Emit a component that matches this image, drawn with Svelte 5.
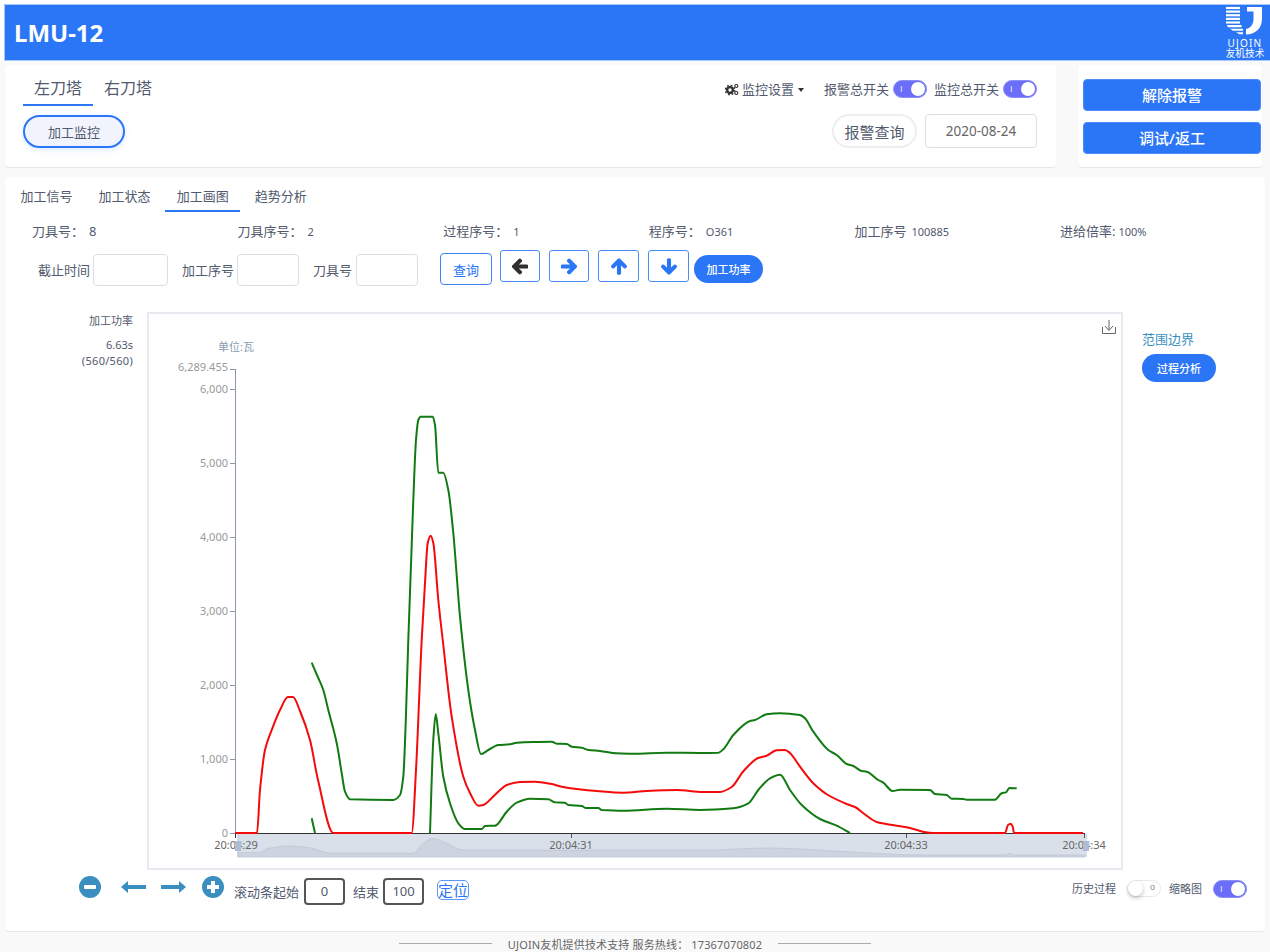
<script>
  const red = [[235,833],[257,833],[260,790],[265,750],[271.7,730],[280,710],[288,697],[293,697],[300,711],[310,740],[318,780],[333.3,833],[411.7,833],[416,770],[421.7,640],[425,583],[427.7,543],[430.7,535.7],[433.3,543],[438.3,600],[443.3,645],[451.7,716.7],[463.3,776.7],[470,793],[478.3,805.7],[483.3,805],[493,796.7],[500,790],[506.7,785],[520,782],[535,781.7],[551.7,784],[561.7,786.7],[576.7,789],[596.7,791],[623,792.7],[646.7,791],[676.7,790],[703,792],[720,792],[731.7,787],[743,771.7],[758,758],[766.7,755.7],[776.7,750.3],[785,750],[790,753],[800,766.7],[813,783],[828,795],[846.7,804],[855,807],[863,813],[876.7,822],[896.7,825.7],[910,828],[923,831.7],[933,833],[1005,833],[1008,825],[1010.7,823.7],[1012.7,826.7],[1014,833],[1083,833]];
  const greenTop = [[311.7,662.7],[318.3,678],[323.3,690],[328.3,710],[336.7,743],[341.7,773],[345,791.7],[350,799.3],[393.3,800],[400,795],[403.3,776.7],[405.7,723],[408.3,640],[413.3,500],[416,440],[418.3,420],[420.7,416.7],[432.7,416.7],[435,425],[438.3,472.7],[443.3,472.7],[448.3,490],[453.3,533],[460,616.7],[468.3,690],[475,730],[481,754],[488.3,750],[498.3,745],[510,744.3],[516.7,742.7],[533,742],[551.7,741.7],[556.7,743.7],[566.7,744],[571.7,746.7],[581.7,747.7],[588.3,750],[600,751],[616.7,753.3],[633,753.7],[666.7,752.7],[700,753],[718.3,752.7],[723.3,749.3],[733.3,735],[750,721],[755,720],[766.7,714.3],[780,713.3],[800,715],[805,718.3],[813.3,731.7],[828.3,750],[836.7,755],[846.7,764],[853.3,766],[861.7,771],[866.7,771.7],[878.3,780],[883.3,782.7],[892.7,791],[900,789.7],[930,790],[935,794],[946.7,795],[951.7,798.7],[963.3,799],[966.7,799.7],[995,799.7],[1001.7,793.3],[1006,792.3],[1009.3,788],[1016.7,788.3]];
  const greenLowA = [[311.7,818.3],[315,833]];
  const greenLowB = [[430,833],[433.3,740],[435.7,714],[438.3,733.3],[443.3,776.7],[450,803.3],[458.3,823.3],[465,829],[481.7,829],[485,826],[495,825.7],[506.7,811.7],[516.7,802.7],[530,798.7],[548.3,799.3],[555,802.3],[565,802.7],[568.3,805],[581.7,806],[586,808],[598.3,808],[601.7,810],[623.3,810.7],[666.7,808.7],[700,810],[733,808.3],[748.3,803.3],[758.3,790],[770,778.3],[780,774.7],[790,790],[801.7,805],[820,819],[836.7,825.7],[850,833]];
  const thumb = [[238,852.7],[260,852.7],[266.7,848.7],[290,846],[306.7,847.3],[333,853.3],[413,853.3],[421.7,845],[431.7,838.3],[443.3,841.7],[463,850],[530,850.3],[700,850.3],[770,848],[850,852],[920,855],[1005,855],[1010,853.5],[1014,855],[1085,855]];

  // monotone cubic: flat runs stay flat and peaks do not overshoot
  function smooth(pts) {
    const n = pts.length;
    const sec = [];
    for (let i = 0; i < n - 1; i++) sec.push((pts[i + 1][1] - pts[i][1]) / (pts[i + 1][0] - pts[i][0]));
    const m = pts.map((_, i) => {
      if (i === 0) return sec[0];
      if (i === n - 1) return sec[n - 2];
      const a = sec[i - 1];
      const b = sec[i];
      return a * b <= 0 ? 0 : (2 * a * b) / (a + b);
    });
    let d = `M${pts[0][0]} ${pts[0][1]}`;
    for (let i = 0; i < n - 1; i++) {
      const dx = (pts[i + 1][0] - pts[i][0]) / 3;
      const c1x = pts[i][0] + dx;
      const c1y = pts[i][1] + m[i] * dx;
      const c2x = pts[i + 1][0] - dx;
      const c2y = pts[i + 1][1] - m[i + 1] * dx;
      d += `C${c1x.toFixed(1)} ${c1y.toFixed(1)} ${c2x.toFixed(1)} ${c2y.toFixed(1)} ${pts[i + 1][0]} ${pts[i + 1][1]}`;
    }
    return d;
  }
  const thumbArea = smooth(thumb) + 'L1085 857L238 857Z';
  const yTicks = [[0,833],[1000,759],[2000,685],[3000,611],[4000,537],[5000,463],[6000,389]];
  const fmt = (n) => n.toLocaleString('en-US');
  const infos = [
    { k: '刀具号：', v: '8', big: true },
    { k: '刀具序号：', v: '2' },
    { k: '过程序号：', v: '1' },
    { k: '程序号：', v: 'O361' },
    { k: '加工序号', v: '100885' },
    { k: '进给倍率:', v: '100%', tight: true }
  ];
</script>

<div class="page">
  <div class="top">
    <header class="bar">
      <h1>LMU-12</h1>
      <div class="logo">
        <svg width="38" height="29" viewBox="0 0 38 32" preserveAspectRatio="none">
          <g fill="#fff">
            <rect x="0" y="1" width="14" height="2.4" />
            <rect x="0" y="5" width="14" height="2.4" />
            <rect x="0" y="9" width="14" height="2.4" />
            <rect x="0" y="13" width="14" height="2.4" />
            <rect x="0" y="17" width="14" height="2.4" />
            <path d="M0.6 21H15.5V23.4H2.2Z" />
            <path d="M4 25H17V27.4H7Z" />
            <path d="M10 29H17V31.3H13.5Z" />
            <path d="M21 1H36V14C36 24 30 31 20 31.5V25.5C25 24 27.5 20 27.5 14V6H21Z" />
          </g>
        </svg>
        <span class="ujoin">UJOIN</span>
        <span class="ujcn">友机技术</span>
      </div>
    </header>
  </div>

  <div class="toprow">
    <section class="card cardleft">
      <div class="cl">
        <div class="turrets">
          <span class="turret on">左刀塔</span>
          <span class="turret">右刀塔</span>
        </div>
        <button class="monitor">加工监控</button>
      </div>
      <div class="cr">
        <div class="setrow">
          <span class="gears">
            <svg width="14" height="13" viewBox="0 0 14 13">
              <circle cx="5" cy="7" r="2.9" fill="none" stroke="#333" stroke-width="2.4" />
              <circle cx="5" cy="7" r="4.7" fill="none" stroke="#333" stroke-width="1.4" stroke-dasharray="1.8 1.9" />
              <circle cx="11.3" cy="3" r="1.5" fill="none" stroke="#333" stroke-width="1.2" />
              <circle cx="11.3" cy="10" r="1.5" fill="none" stroke="#333" stroke-width="1.2" />
            </svg>
          </span>
          <span class="setlabel">监控设置</span>
          <i class="caret"></i>
          <span class="swlabel first">报警总开关</span>
          <span class="sw on"><em>I</em><b></b></span>
          <span class="swlabel second">监控总开关</span>
          <span class="sw on"><em>I</em><b></b></span>
        </div>
        <div class="queryrow">
          <button class="alarmq">报警查询</button>
          <div class="date">2020-08-24</div>
        </div>
      </div>
    </section>
    <section class="card cardright">
      <button class="primary">解除报警</button>
      <button class="primary">调试/返工</button>
    </section>
  </div>

  <main class="card mainc">
    <nav class="tabs">
      <span class="tab">加工信号</span>
      <span class="tab">加工状态</span>
      <span class="tab on">加工画图</span>
      <span class="tab">趋势分析</span>
    </nav>

    <div class="infos">
      {#each infos as it}
        <div class="info">
          <span class="ik">{it.k}</span><span class="iv" class:big={it.big} class:tight={it.tight}>{it.v}</span>
        </div>
      {/each}
    </div>

    <div class="filters">
      <label class="fl w1">截止时间<span class="inp i1"></span></label>
      <label class="fl w2">加工序号<span class="inp i2"></span></label>
      <label class="fl w3">刀具号<span class="inp i2"></span></label>
      <button class="query">查询</button>
      <div class="arrows">
        <button class="arr a40" aria-label="左">
          <svg width="16" height="17" viewBox="0 0 448 512"><path fill="#2f2f2f" stroke="#2f2f2f" stroke-width="44" stroke-linejoin="round" d="M257.5 445.1l-22.2 22.2c-9.4 9.4-24.6 9.4-33.9 0L7 273c-9.4-9.4-9.4-24.6 0-33.9L201.4 44.7c9.4-9.4 24.6-9.4 33.9 0l22.2 22.2c9.5 9.5 9.3 25-.4 34.3L136.6 216H424c13.3 0 24 10.7 24 24v32c0 13.3-10.7 24-24 24H136.6l120.5 114.8c9.8 9.3 10 24.8.4 34.3z"/></svg>
        </button>
        <button class="arr a40" aria-label="右">
          <svg width="16" height="17" viewBox="0 0 448 512"><path fill="#2a76f6" stroke="#2a76f6" stroke-width="44" stroke-linejoin="round" d="M190.5 66.9l22.2-22.2c9.4-9.4 24.6-9.4 33.9 0L441 239c9.4 9.4 9.4 24.6 0 33.9L246.6 467.3c-9.4 9.4-24.6 9.4-33.9 0l-22.2-22.2c-9.5-9.5-9.3-25 .4-34.3L311.4 296H24c-13.3 0-24-10.7-24-24v-32c0-13.3 10.7-24 24-24h287.4L190.9 101.2c-9.8-9.3-10-24.8-.4-34.3z"/></svg>
        </button>
        <button class="arr a41" aria-label="上">
          <svg width="16" height="17" viewBox="0 0 448 512"><path fill="#2a76f6" stroke="#2a76f6" stroke-width="44" stroke-linejoin="round" d="M34.9 289.5l-22.2-22.2c-9.4-9.4-9.4-24.6 0-33.9L207 39c9.4-9.4 24.6-9.4 33.9 0l194.3 194.3c9.4 9.4 9.4 24.6 0 33.9L413 289.4c-9.5 9.5-25 9.3-34.3-.4L264 168.6V456c0 13.3-10.7 24-24 24h-32c-13.3 0-24-10.7-24-24V168.6L69.2 289.1c-9.3 9.8-24.8 10-34.3.4z"/></svg>
        </button>
        <button class="arr a41 last" aria-label="下">
          <svg width="16" height="17" viewBox="0 0 448 512"><path fill="#2a76f6" stroke="#2a76f6" stroke-width="44" stroke-linejoin="round" d="M413.1 222.5l22.2 22.2c9.4 9.4 9.4 24.6 0 33.9L241 473c-9.4 9.4-24.6 9.4-33.9 0L12.7 278.6c-9.4-9.4-9.4-24.6 0-33.9l22.2-22.2c9.5-9.5 25-9.3 34.3.4L184 343.4V56c0-13.3 10.7-24 24-24h32c13.3 0 24 10.7 24 24v287.4l114.8-120.5c9.3-9.8 24.8-10 34.3-.4z"/></svg>
        </button>
      </div>
      <button class="pill powerp">加工功率</button>
    </div>

    <div class="chartrow">
      <aside class="legendl">
        <div>加工功率</div>
        <div class="l2">6.63s</div>
        <div class="l3">(560/560)</div>
      </aside>
      <div class="chartbox">
        <svg class="chart" width="972" height="554" viewBox="149 314 972 554">
          <text x="236" y="351" class="unit" text-anchor="middle">单位:瓦</text>
          <line x1="235.5" y1="369" x2="235.5" y2="833" stroke="#8a97ad" />
          <line x1="230" y1="369.5" x2="235" y2="369.5" stroke="#8a97ad" />
          <text x="228" y="371" class="yl" text-anchor="end">6,289.455</text>
          {#each yTicks as t}
            <line x1="230" y1={t[1] + 0.5} x2="235" y2={t[1] + 0.5} stroke="#8a97ad" />
            <text x="228" y={t[1] + 4} class="yl" text-anchor="end">{fmt(t[0])}</text>
          {/each}

          <rect x="238" y="834" width="847" height="23" fill="#d9e0ea" />
          <path d={thumbArea} fill="#cdd4df" stroke="#bcc5d3" stroke-width="0.8" />
          <line x1="235" y1="833.5" x2="1085" y2="833.5" stroke="#333" />
          <line x1="235.5" y1="833" x2="235.5" y2="838" stroke="#333" />
          <line x1="571.5" y1="834" x2="571.5" y2="838" stroke="#555" />
          <line x1="906.5" y1="834" x2="906.5" y2="838" stroke="#555" />
          <line x1="1084.5" y1="834" x2="1084.5" y2="838" stroke="#555" />

          <text x="236" y="849" class="xl" text-anchor="middle">20:04:29</text>
          <text x="571" y="849" class="xl" text-anchor="middle">20:04:31</text>
          <text x="906" y="849" class="xl" text-anchor="middle">20:04:33</text>
          <text x="1084" y="849" class="xl" text-anchor="middle">20:04:34</text>

          <line x1="238" y1="834" x2="238" y2="857" stroke="#b5c2d6" />
          <rect x="235" y="841" width="6" height="10" fill="#aebdd4" />
          <line x1="1086" y1="834" x2="1086" y2="857" stroke="#b5c2d6" />
          <rect x="1083" y="841" width="6" height="10" fill="#aebdd4" />

          <path d={smooth(greenTop)} class="ln" stroke="#127a12" />
          <path d={smooth(greenLowA)} class="ln" stroke="#127a12" />
          <path d={smooth(greenLowB)} class="ln" stroke="#127a12" />
          <path d={smooth(red)} class="ln" stroke="#f40a0a" />

          <g fill="none" stroke="#666" stroke-width="1">
            <path d="M1102.5 327V333.5H1115.5V327" />
            <path d="M1109 320V330M1105 326L1109 330.5L1113 326" />
          </g>
        </svg>
      </div>
      <aside class="legendr">
        <div class="range">范围边界</div>
        <button class="pill analyse">过程分析</button>
      </aside>
    </div>

    <div class="bottom">
      <div class="ctrls">
        <svg class="ic" width="22" height="22" viewBox="0 0 22 22"><circle cx="11" cy="11" r="11" fill="#3a8fc0"/><rect x="5" y="9" width="12" height="4" rx="1" fill="#fff"/></svg>
        <svg class="ic ar1" width="25" height="12" viewBox="0 0 25 12"><path fill="#3a8fc0" d="M0 6L7 0V4H25V8H7V12Z"/></svg>
        <svg class="ic ar2" width="25" height="12" viewBox="0 0 25 12"><path fill="#3a8fc0" d="M25 6L18 0V4H0V8H18V12Z"/></svg>
        <svg class="ic pl" width="22" height="22" viewBox="0 0 22 22"><circle cx="11" cy="11" r="11" fill="#3a8fc0"/><path fill="#fff" d="M9 5H13V9H17V13H13V17H9V13H5V9H9Z"/></svg>
        <span class="cl1">滚动条起始</span>
        <span class="num">0</span>
        <span class="cl2">结束</span>
        <span class="num">100</span>
        <button class="locate">定位</button>
      </div>
      <div class="rsw">
        <span class="small">历史过程</span>
        <span class="sw off"><b></b><em>o</em></span>
        <span class="small s2">缩略图</span>
        <span class="sw on"><em>I</em><b></b></span>
      </div>
    </div>
  </main>

  <footer class="foot">
    <i></i>
    <span>UJOIN友机提供技术支持 服务热线： 17367070802</span>
    <i></i>
  </footer>
</div>

<style>
  :global(body) {
    margin: 0;
    background: #f9f9f9;
  }
  .page {
    width: 1270px;
    height: 952px;
    overflow: hidden;
    font-family: "Noto Sans", "Noto Sans CJK SC", sans-serif;
    color: #515a6e;
    background: #f9f9f9;
    display: flex;
    flex-direction: column;
    font-size: 13px;
  }
  button {
    font-family: inherit;
    padding: 0;
    cursor: pointer;
    background: none;
  }
  .top {
    background: #fff;
    padding: 4px 0 0 4px;
  }
  .bar {
    height: 55px;
    background: #2a76f6;
    border: 1px solid #a8c8fa;
    border-right: 0;
    display: flex;
    justify-content: space-between;
    align-items: center;
    padding: 0 5px 0 9px;
  }
  h1 {
    margin: 0;
    color: #fff;
    font-size: 24px;
    font-weight: 700;
    line-height: 1;
  }
  .logo {
    width: 40px;
    align-self: flex-start;
    padding-top: 1px;
    display: flex;
    flex-direction: column;
    align-items: center;
    color: #fff;
    line-height: 1;
  }
  .ujoin {
    font-size: 10px;
    letter-spacing: 1.2px;
    margin-top: 3px;
    height: 10px;
  }
  .ujcn {
    font-size: 9.7px;
    margin-top: 1px;
    height: 10px;
    white-space: nowrap;
  }
  .toprow {
    display: flex;
    gap: 22px;
    margin: 4px 0 0 5px;
  }
  .card {
    background: #fff;
    border-radius: 4px;
    box-shadow: 0 1px 1px rgba(0, 0, 0, 0.08);
  }
  .cardleft {
    width: 1051px;
    height: 102px;
    display: flex;
    justify-content: space-between;
    box-sizing: border-box;
    padding: 0 19px 0 18px;
  }
  .cardright {
    width: 184px;
    height: 102px;
    box-sizing: border-box;
    padding: 14px 0 0 5px;
    display: flex;
    flex-direction: column;
    gap: 11px;
  }
  .primary {
    width: 178px;
    height: 32px;
    background: #2a76f6;
    border: 1px solid #4c8cf7;
    border-radius: 4px;
    color: #fff;
    font-size: 15px;
    font-weight: 500;
    line-height: 1;
  }
  .turrets {
    display: flex;
    margin-top: 10px;
  }
  .turret {
    width: 70px;
    height: 29px;
    box-sizing: content-box;
    text-align: center;
    font-size: 16px;
    line-height: 26px;
    color: #515a6e;
  }
  .turret.on {
    border-bottom: 2px solid #2a76f6;
  }
  .monitor {
    display: block;
    margin-top: 9px;
    width: 102px;
    height: 33px;
    border: 2px solid #2a76f6;
    border-radius: 17px;
    background: #f2f4fd;
    color: #515a6e;
    font-size: 13px;
    box-shadow: 0 2px 6px rgba(42, 118, 246, 0.15);
  }
  .cl {
    display: flex;
    flex-direction: column;
    align-items: flex-start;
  }
  .cr {
    display: flex;
    flex-direction: column;
    align-items: flex-end;
  }
  .setrow {
    display: flex;
    align-items: center;
    height: 18px;
    margin-top: 15px;
    line-height: 18px;
  }
  .gears {
    display: flex;
    margin-right: 3px;
  }
  .caret {
    width: 0;
    height: 0;
    border: 3.5px solid transparent;
    border-top: 4px solid #333;
    border-bottom: 0;
    margin: 1px 20px 0 4px;
  }
  .swlabel.first {
    margin-right: 4px;
  }
  .swlabel.second {
    margin: 0 4px 0 7px;
  }
  .sw {
    position: relative;
    width: 34px;
    height: 18px;
    box-sizing: border-box;
    border-radius: 9px;
    display: inline-block;
    flex: none;
  }
  .sw.on {
    background: #6a6ef8;
    border: 1px solid #8c8ff9;
  }
  .sw.off {
    background: #fff;
    border: 1px solid #e8e8ec;
  }
  .sw b {
    position: absolute;
    top: 1px;
    width: 14px;
    height: 14px;
    border-radius: 50%;
    background: #fff;
  }
  .sw.on b {
    right: 1px;
  }
  .sw.off b {
    left: 0;
    top: 0;
    width: 15px;
    height: 15px;
    box-shadow: 0 2px 4px rgba(0, 0, 0, 0.25);
  }
  .sw em {
    position: absolute;
    font-family: "Liberation Sans", sans-serif;
    font-style: normal;
    font-size: 9px;
    line-height: 16px;
  }
  .sw.on em {
    left: 6px;
    color: #e8e9ff;
  }
  .sw.off em {
    right: 5px;
    color: #888;
    line-height: 13px;
  }
  .queryrow {
    display: flex;
    gap: 8px;
    margin-top: 16px;
  }
  .alarmq {
    width: 85px;
    height: 34px;
    border: 2px solid #eeeeee;
    border-radius: 17px;
    background: #fff;
    font-size: 15px;
    color: #515a6e;
  }
  .date {
    width: 112px;
    height: 34px;
    box-sizing: border-box;
    border: 1px solid #dcdee6;
    border-radius: 4px;
    text-align: center;
    line-height: 32px;
    font-size: 13.5px;
    color: #666;
  }
  .mainc {
    width: 1260px;
    height: 754px;
    margin: 10px 0 0 5px;
    display: flex;
    flex-direction: column;
    flex: none;
  }
  .tabs {
    display: flex;
    gap: 3.1px;
    padding: 5px 0 0 4px;
    height: 30px;
  }
  .tab {
    width: 75px;
    height: 30px;
    box-sizing: border-box;
    text-align: center;
    line-height: 28px;
    font-size: 13px;
  }
  .tab.on {
    border-bottom: 2px solid #2a76f6;
  }
  .infos {
    display: flex;
    padding-left: 27px;
    margin-top: 9px;
    height: 20px;
    line-height: 20px;
  }
  .info {
    width: 205.6px;
    flex: none;
    white-space: nowrap;
  }
  .iv {
    font-size: 11px;
    margin-left: 5px;
  }
  .iv.big {
    font-size: 13px;
  }
  .iv.tight {
    margin-left: 3px;
  }
  .ik {
    font-size: 13px;
  }
  .filters {
    display: flex;
    align-items: center;
    margin-top: 11px;
    height: 35px;
    padding-left: 33px;
  }
  .fl {
    display: flex;
    align-items: center;
    gap: 3px;
    line-height: 30px;
  }
  .w1 {
    margin-right: 14px;
  }
  .w2 {
    margin-right: 14px;
  }
  .w3 {
    gap: 4px;
    margin-right: 22px;
  }
  .inp {
    display: block;
    height: 32px;
    box-sizing: border-box;
    border: 1px solid #dcdee6;
    border-radius: 4px;
    background: #fff;
  }
  .i1 {
    width: 75px;
  }
  .i2 {
    width: 62px;
  }
  .query {
    width: 52px;
    height: 32px;
    border: 1px solid #3f84f7;
    border-radius: 4px;
    background: #fff;
    color: #2a76f6;
    font-size: 13px;
    margin-top: -1px;
  }
  .arrows {
    display: flex;
    gap: 9px;
    margin: -7px 0 0 8px;
  }
  .arr {
    height: 32px;
    border: 1px solid #4a8cf7;
    border-radius: 3px;
    background: #fff;
    display: flex;
    align-items: center;
    justify-content: center;
  }
  .a40 {
    width: 40px;
  }
  .a41 {
    width: 41px;
  }
  .pill {
    background: #2a76f6;
    border: 0;
    border-radius: 14px;
    color: #fff;
    font-size: 11px;
    font-weight: 500;
    height: 28px;
  }
  .powerp {
    width: 69px;
    margin: -2px 0 0 5px;
  }
  .chartrow {
    display: flex;
    margin-top: 25px;
    height: 558px;
  }
  .legendl {
    width: 128px;
    flex: none;
    text-align: right;
    font-size: 11px;
    line-height: 16px;
    padding-top: 1px;
    margin-right: 14px;
    color: #515a6e;
  }
  .l2 {
    margin-top: 8px;
  }
  .l3 {
    letter-spacing: 0.3px;
  }
  .chartbox {
    width: 976px;
    height: 558px;
    box-sizing: border-box;
    border: 2px solid #e9eaf0;
    flex: none;
  }
  .chart {
    display: block;
  }
  .yl {
    font-size: 11px;
    fill: #999;
  }
  .xl {
    font-size: 11px;
    fill: #666;
  }
  .unit {
    font-size: 11px;
    fill: #8a9bb5;
  }
  .ln {
    fill: none;
    stroke-width: 2;
    stroke-linejoin: round;
  }
  .legendr {
    margin-left: 19px;
    padding-top: 17px;
    width: 100px;
  }
  .range {
    color: #3a8fc0;
    font-size: 13px;
    line-height: 20px;
  }
  .analyse {
    width: 74px;
    margin-top: 5px;
    display: block;
  }
  .bottom {
    display: flex;
    justify-content: space-between;
    align-items: flex-start;
    margin-top: 8px;
  }
  .ctrls {
    display: flex;
    align-items: center;
    height: 27px;
    padding-left: 74px;
  }
  .ic {
    margin-bottom: 9px;
  }
  .ar1 {
    margin-left: 20px;
  }
  .ar2 {
    margin-left: 15px;
  }
  .pl {
    margin-left: 16px;
  }
  .cl1 {
    margin-left: 10px;
    line-height: 20px;
  }
  .cl2 {
    margin-left: 8px;
  }
  .num {
    width: 41px;
    height: 27px;
    box-sizing: border-box;
    border: 2px solid #555;
    border-radius: 4px;
    margin-left: 5px;
    text-align: center;
    line-height: 23px;
    font-size: 13px;
    color: #515a6e;
  }
  .cl2 + .num {
    margin-left: 4px;
  }
  .locate {
    width: 32px;
    height: 20px;
    margin: 0 0 3px 13px;
    border: 1px solid #5a97f8;
    border-radius: 5px;
    color: #2a76f6;
    font-size: 15px;
    line-height: 18px;
    background: #fff;
    white-space: nowrap;
  }
  .rsw {
    display: flex;
    align-items: flex-start;
    padding: 0 18px 0 0;
    height: 20px;
    margin-top: 2px;
  }
  .small {
    font-size: 11px;
    line-height: 18px;
  }
  .s2 {
    margin: 0 11px 0 8px;
  }
  .rsw .small:first-child {
    margin-right: 11px;
  }
  .rsw .sw.off {
    height: 17px;
  }
  .foot {
    flex: 1;
    display: flex;
    align-items: center;
    justify-content: center;
    gap: 16px;
    font-size: 11px;
    color: #666;
    padding-top: 4px;
    box-sizing: border-box;
    letter-spacing: 0.15px;
  }
  .foot i {
    width: 93px;
    height: 1px;
    background: #aaa;
  }
</style>
